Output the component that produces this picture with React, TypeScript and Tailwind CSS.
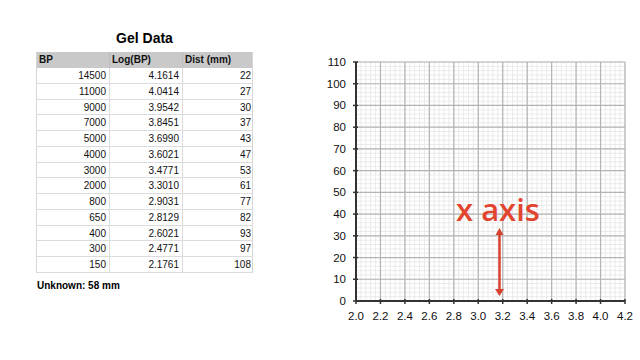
import React from 'react';

const rows: [string, string, string][] = [
  ['14500', '4.1614', '22'],
  ['11000', '4.0414', '27'],
  ['9000', '3.9542', '30'],
  ['7000', '3.8451', '37'],
  ['5000', '3.6990', '43'],
  ['4000', '3.6021', '47'],
  ['3000', '3.4771', '53'],
  ['2000', '3.3010', '61'],
  ['800', '2.9031', '77'],
  ['650', '2.8129', '82'],
  ['400', '2.6021', '93'],
  ['300', '2.4771', '97'],
  ['150', '2.1761', '108'],
];

// chart frame inside the svg
const X0 = 36;
const X1 = 305;
const Y0 = 12;
const Y1 = 251;
const MAJ_X = (X1 - X0) / 11;
const MAJ_Y = (Y1 - Y0) / 11;

const GelTable = () => (
  <div className="ml-[36px] w-[217px] shrink-0">
    <div className="mt-[28px] h-[20px] text-center text-[14px] font-bold leading-[20px] text-black">Gel Data</div>
    <div className="mt-[4px] border-x border-[#d6d6d6] text-[10px] text-[#111]">
      <div className="grid h-[16px] grid-cols-[73px_73px_71px] bg-[#c9c9c9] font-bold leading-[16px]">
        <div className="border-r border-[#bdbdbd] pl-[2px]">BP</div>
        <div className="border-r border-[#bdbdbd] pl-[2px]">Log(BP)</div>
        <div className="pl-[2px]">Dist (mm)</div>
      </div>
      {rows.map(([bp, log, dist]) => (
        <div key={bp} className="grid h-[15.77px] grid-cols-[73px_73px_71px] border-b border-[#dcdcdc] leading-[15px]">
          <div className="border-r border-[#dcdcdc] pr-[3px] text-right">{bp}</div>
          <div className="border-r border-[#dcdcdc] pr-[3px] text-right">{log}</div>
          <div className="pr-[3px] text-right">{dist}</div>
        </div>
      ))}
    </div>
    <div className="mt-[6px] pl-[1px] text-[10px] font-bold leading-[14px] text-black">Unknown: 58 mm</div>
  </div>
);

const Chart = () => {
  const minorX = Array.from({ length: 56 }, (_, i) => X0 + (i * MAJ_X) / 5);
  const minorY = Array.from({ length: 56 }, (_, i) => Y0 + (i * MAJ_Y) / 5);
  const majorX = Array.from({ length: 12 }, (_, i) => X0 + i * MAJ_X);
  const majorY = Array.from({ length: 12 }, (_, i) => Y0 + i * MAJ_Y);
  const font = "'Liberation Sans', Arial, sans-serif";

  return (
    <svg width="320" height="290" viewBox="0 0 320 290" className="ml-[67px] mt-[50px] shrink-0">
      {minorX.map((x, i) => (
        <line key={'mx' + i} x1={x} x2={x} y1={Y0} y2={Y1} stroke="#e6e6e6" strokeWidth={0.8} />
      ))}
      {minorY.map((y, i) => (
        <line key={'my' + i} x1={X0} x2={X1} y1={y} y2={y} stroke="#e6e6e6" strokeWidth={0.8} />
      ))}
      {majorX.map((x, i) => (
        <line key={'Mx' + i} x1={x} x2={x} y1={Y0} y2={Y1} stroke="#b3b3b3" strokeWidth={1.2} />
      ))}
      {majorY.map((y, i) => (
        <line key={'My' + i} x1={X0} x2={X1} y1={y} y2={y} stroke="#b3b3b3" strokeWidth={1.2} />
      ))}

      {/* axes */}
      <line x1={X0} x2={X0} y1={Y0} y2={Y1} stroke="#333" strokeWidth={2} />
      <line x1={X0} x2={X1} y1={Y1} y2={Y1} stroke="#333" strokeWidth={2} />
      {majorY.map((y, i) => (
        <line key={'ty' + i} x1={X0 - 3} x2={X0 + 2} y1={y} y2={y} stroke="#333" strokeWidth={1.5} />
      ))}
      {majorX.map((x, i) => (
        <line key={'tx' + i} x1={x} x2={x} y1={Y1 - 2} y2={Y1 + 3} stroke="#333" strokeWidth={1.5} />
      ))}

      {majorY.map((y, i) => (
        <text key={'ly' + i} x={26} y={y} textAnchor="end" dominantBaseline="central" fontSize={11.5} fontFamily={font} fill="#111">
          {(110 - i * 10).toString()}
        </text>
      ))}
      {majorX.map((x, i) => (
        <text key={'lx' + i} x={x} y={266} textAnchor="middle" dominantBaseline="central" fontSize={11.5} fontFamily={font} fill="#111">
          {(2 + i * 0.2).toFixed(1)}
        </text>
      ))}

      {/* annotation */}
      <text x={136} y={171} fontSize={31} fontWeight={600} fontFamily="'Open Sans', sans-serif" fill="#e2452f">
        x axis
      </text>
      <line x1={179.5} x2={179.5} y1={183} y2={241} stroke="#d9412f" strokeWidth={2.5} />
      <path d="M175.5 185 L179.5 178 L183.5 185 Z" fill="#d9412f" />
      <path d="M175 239 L179.5 246 L184 239 Z" fill="#d9412f" />
    </svg>
  );
};

export default function App() {
  return (
    <div className="flex h-[360px] w-[640px] items-start overflow-hidden bg-white font-['Liberation_Sans',Arial,sans-serif]">
      <GelTable />
      <Chart />
    </div>
  );
}
